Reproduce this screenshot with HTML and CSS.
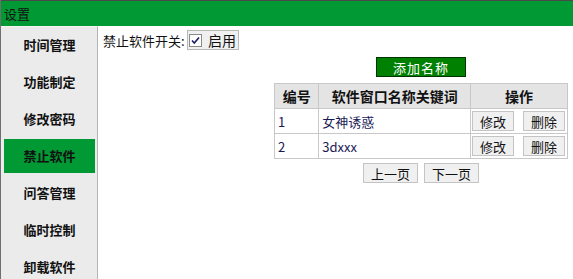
FILE: index.html
```html
<!DOCTYPE html>
<html lang="zh-CN">

<head>
    <meta charset="UTF-8">
    <meta name="viewport" content="width=device-width, initial-scale=1.0">
    <title>设置</title>
    <link rel="stylesheet" href="styles.css">
</head>

<body>
    <div class="title-bar">设置</div>

    <div class="layout">
        <ul class="side-menu">
            <li class="menu-item">时间管理</li>
            <li class="menu-item">功能制定</li>
            <li class="menu-item">修改密码</li>
            <li class="menu-item active">禁止软件</li>
            <li class="menu-item">问答管理</li>
            <li class="menu-item">临时控制</li>
            <li class="menu-item">卸载软件</li>
        </ul>

        <div class="main">
            <div class="switch-row">
                <span class="switch-label">禁止软件开关:</span>
                <label class="check-box">
                    <span class="check-mark">
                        <svg width="11" height="11" viewBox="0 0 11 11">
                            <path d="M2 5.5 L4.3 8 L9 2.5" fill="none" stroke="#1a1a66" stroke-width="1.6" />
                        </svg>
                    </span>
                    启用
                </label>
            </div>

            <div class="list-block">
                <button class="add-button">添加名称</button>

                <table class="name-table">
                    <tr>
                        <th class="col-id">编号</th>
                        <th class="col-name">软件窗口名称关键词</th>
                        <th class="col-ops">操作</th>
                    </tr>
                    <tr>
                        <td>1</td>
                        <td>女神诱惑</td>
                        <td class="ops"><button class="small-button">修改</button><button class="small-button">删除</button></td>
                    </tr>
                    <tr>
                        <td>2</td>
                        <td>3dxxx</td>
                        <td class="ops"><button class="small-button">修改</button><button class="small-button">删除</button></td>
                    </tr>
                </table>

                <div class="pager">
                    <button class="page-button">上一页</button>
                    <button class="page-button">下一页</button>
                </div>
            </div>
        </div>
    </div>
</body>

</html>
```

FILE: styles.css
```css
body {
    margin: 0;
    font-family: "Noto Sans CJK SC", "DejaVu Sans", sans-serif;
    font-size: 13px;
    color: #111;
    background-color: white;
    height: 279px;
    overflow: hidden;
    border-left: 1px solid #6f6f6f;
    box-sizing: border-box;
}

.title-bar {
    height: 25px;
    line-height: 25px;
    padding-left: 3px;
    background-color: #009933;
    border-top: 1px solid #4a4a4a;
    font-size: 13px;
    color: #111;
}

.layout {
    display: flex;
    height: 253px;
}

.side-menu {
    list-style: none;
    margin: 0;
    padding: 0 2px 0 3px;
    width: 91px;
    background-color: #ebebeb;
    border-top: 1px solid #f4f4f4;
    border-right: 1px solid #b4b4b4;
}

.menu-item {
    height: 34px;
    line-height: 34px;
    margin-top: 3px;
    text-align: center;
    font-weight: bold;
    font-size: 13px;
    color: #111;
}

.menu-item:first-child {
    margin-top: 1px;
}

.menu-item.active {
    background-color: #009933;
}

.main {
    flex: 1;
    padding: 4px 0 0 5px;
}

.switch-row {
    display: flex;
    align-items: center;
    height: 20px;
}

.switch-label {
    width: 84px;
}

.check-box {
    display: flex;
    align-items: center;
    gap: 6px;
    height: 18px;
    padding: 0 2px 0 1px;
    border: 1px solid #b8b8b8;
    background-color: #f0f0f0;
    font-size: 14px;
}

.check-mark {
    display: flex;
    align-items: center;
    justify-content: center;
    width: 11px;
    height: 11px;
    border: 1px solid #8a8a8a;
    background-color: white;
}

.list-block {
    display: flex;
    flex-direction: column;
    align-items: center;
    width: 294px;
    margin-left: 171px;
}

.add-button {
    margin-top: 7px;
    width: 90px;
    height: 20px;
    padding: 0;
    background-color: #008000;
    border: 1px solid #003300;
    color: white;
    font-family: inherit;
    font-size: 13px;
    letter-spacing: 1px;
}

.name-table {
    margin-top: 6px;
    width: 294px;
    border-collapse: collapse;
}

.name-table th,
.name-table td {
    height: 24px;
    padding: 0 3px;
    border: 1px solid #c8c8c8;
    text-align: left;
    font-size: 13px;
}

.name-table th {
    background-color: #e4e4e4;
    font-weight: bold;
    font-size: 14px;
    text-align: center;
}

.name-table td {
    color: #1a1a55;
}

.col-id {
    width: 38px;
}

.col-name {
    width: 148px;
}

.name-table td.ops {
    white-space: nowrap;
    padding: 0 2px 0 1px;
}

.small-button,
.page-button {
    height: 20px;
    padding: 0;
    background-color: #f0f0f0;
    border: 1px solid #c4c4c4;
    font-family: inherit;
    font-size: 13px;
    color: #111;
}

.small-button {
    width: 42px;
}

.small-button + .small-button {
    margin-left: 9px;
}

.pager {
    display: flex;
    gap: 6px;
    margin-top: 4px;
}

.page-button {
    width: 55px;
}
```
